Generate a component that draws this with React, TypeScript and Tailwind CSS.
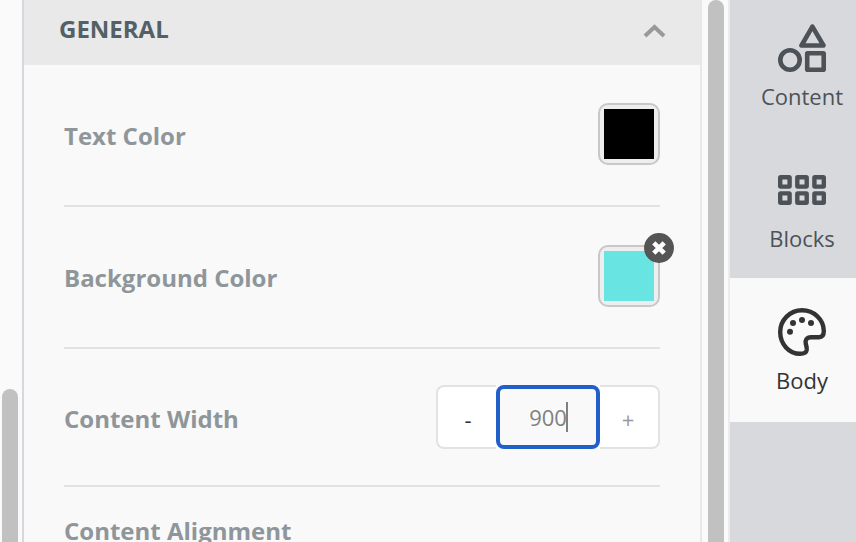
import { useState } from 'react';
import type { ReactNode } from 'react';
import { clsx } from 'clsx';

interface RowProps {
  label: string;
  htmlFor: string;
  className?: string;
  children?: ReactNode;
}

function Row({ label, htmlFor, className, children }: RowProps) {
  return (
    <div className={clsx('flex items-center justify-between border-b-2 border-[#e1e1e6]', className)}>
      <label htmlFor={htmlFor} className="pt-[3px] text-2xl font-bold text-[#8f9699]">
        {label}
      </label>
      {children}
    </div>
  );
}

interface SwatchProps {
  id: string;
  color: string;
  onClear?: () => void;
}

function Swatch({ id, color, onClear }: SwatchProps) {
  return (
    <div className="relative">
      <button
        id={id}
        type="button"
        className="block size-[62px] rounded-[10px] border-2 border-[#c8c8c8] bg-[#eeeeee] p-1"
      >
        <span className="block size-full" style={{ backgroundColor: color }} />
      </button>
      {onClear && (
        <button
          type="button"
          aria-label="Clear color"
          onClick={onClear}
          className="absolute -top-3 -right-3.5 flex size-[30px] items-center justify-center rounded-full bg-[#555555]"
        >
          <svg viewBox="0 0 16 16" className="size-4" stroke="#fff" strokeWidth="4.6">
            <path d="M2.8 2.8L13.2 13.2M13.2 2.8L2.8 13.2" />
          </svg>
        </button>
      )}
    </div>
  );
}

function ContentIcon() {
  return (
    <svg viewBox="0 0 48 48" className="size-12" fill="none" stroke="currentColor" strokeWidth="4.6" strokeLinejoin="round">
      <path d="M34.4 2.6L23.5 21.5H45.5Z" />
      <circle cx="12" cy="36" r="9.7" />
      <rect x="29.2" y="29.2" width="16.5" height="16.5" rx="0.5" />
    </svg>
  );
}

function BlocksIcon() {
  return (
    <svg viewBox="0 0 48 48" className="size-12" fill="none" stroke="currentColor" strokeWidth="4.4" strokeLinejoin="round">
      {[2.2, 19.3, 36.4].map((x) => (
        <g key={x}>
          <rect x={x} y="11.2" width="9.4" height="9.4" rx="0.5" />
          <rect x={x} y="27.4" width="9.4" height="9.4" rx="0.5" />
        </g>
      ))}
    </svg>
  );
}

function BodyIcon() {
  return (
    <svg viewBox="0 0 48 48" className="size-12" fill="none" stroke="currentColor" strokeWidth="4.4">
      <path d="M22 45.8C11 45.8 2.2 36 2.2 24C2.2 12 12 2.2 24 2.2C36 2.2 45.8 11.5 45.8 23C45.8 27 44.5 29.2 41 29.2H33C28.6 29.2 26.8 32.4 27.8 36C28.6 38.5 29 39.5 28.7 42C28.3 44.8 26 45.8 22 45.8Z" />
      <g fill="currentColor" stroke="none">
        <circle cx="12" cy="23.8" r="3" />
        <circle cx="15" cy="15" r="3" />
        <circle cx="24" cy="12" r="3" />
        <circle cx="33" cy="15" r="3" />
      </g>
    </svg>
  );
}

const tabs = [
  { name: 'Content', icon: <ContentIcon /> },
  { name: 'Blocks', icon: <BlocksIcon /> },
  { name: 'Body', icon: <BodyIcon /> },
];

export default function App() {
  const [width, setWidth] = useState(900);
  const [background, setBackground] = useState('#68e5e3');
  const [active, setActive] = useState('Body');

  return (
    <div className="flex h-screen overflow-hidden bg-[#f9f9f9] font-['Open_Sans',sans-serif]">
      {/* Canvas scrollbar */}
      <div className="flex w-6 shrink-0 border-r-2 border-[#d7d7dd] bg-[#fafafa] pt-[389px] pl-0.5">
        <div className="w-4 rounded-t-full bg-[#c1c1c1]" />
      </div>

      {/* Settings panel */}
      <main className="min-w-0 flex-1 border-r-2 border-[#e8e8e8]">
        <button
          type="button"
          className="flex w-full items-center justify-between bg-[#e9e9e9] pt-[11px] pr-[34px] pb-[18px] pl-[35px] text-2xl leading-9 font-bold text-[#536166]"
        >
          <span className="uppercase">General</span>
          <svg viewBox="0 0 24 20" className="h-5 w-6" fill="none" stroke="#999999" strokeWidth="4">
            <path d="M3 17L12.5 8L22 17" />
          </svg>
        </button>
        <div className="px-10">
          <Row label="Text Color" htmlFor="text-color" className="pt-[38px] pb-10">
            <Swatch id="text-color" color="#000000" />
          </Row>
          <Row label="Background Color" htmlFor="background-color" className="pt-[38px] pb-10">
            <Swatch id="background-color" color={background} onClear={() => setBackground('transparent')} />
          </Row>
          <Row label="Content Width" htmlFor="content-width" className="py-9">
            <div className="flex h-16 rounded-lg bg-white text-[22px]">
              <button
                type="button"
                aria-label="Decrease"
                onClick={() => setWidth(width - 1)}
                className="w-[60px] rounded-l-lg border-2 border-r-0 border-[#e1e3e3] pt-1 pl-0.5 text-[#333333]"
              >
                -
              </button>
              <div className="relative">
                <input
                  id="content-width"
                  type="text"
                  value={width}
                  onChange={(e) => setWidth(Number(e.target.value) || 0)}
                  className="h-16 w-[104px] rounded-lg border-4 border-[#2060c8] bg-[#f9f9f9] text-center text-[#808080] caret-transparent outline-none"
                />
                <span className="pointer-events-none absolute top-[17px] left-[70px] h-[30px] w-0.5 bg-[#808080]" />
              </div>
              <button
                type="button"
                aria-label="Increase"
                onClick={() => setWidth(width + 1)}
                className="w-[60px] rounded-r-lg border-2 border-l-0 border-[#e1e3e3] pt-1 pr-0.5 text-[#999999]"
              >
                +
              </button>
            </div>
          </Row>
          <p className="pt-7 text-2xl font-bold text-[#8f9699]">Content Alignment</p>
        </div>
      </main>

      {/* Panel scrollbar */}
      <div className="flex w-7 shrink-0 border-r-2 border-[#ececec] bg-[#fafafa] pl-1.5">
        <div className="w-4 rounded-t-full bg-[#c1c1c1]" />
      </div>

      {/* Editor tabs */}
      <nav className="w-[126px] shrink-0 bg-[#d8d9dd]">
        <div className="-mt-1.5 flex flex-col">
          {tabs.map((tab) => (
            <button
              key={tab.name}
              type="button"
              onClick={() => setActive(tab.name)}
              className={clsx(
                'flex flex-col items-center gap-2 pt-[30px] pl-[18px] text-[22px] leading-8',
                tab.name === active ? 'bg-[#f9f9f9] pb-[26px] text-[#333333]' : 'pb-6 text-[#4c5257]'
              )}
            >
              {tab.icon}
              {tab.name}
            </button>
          ))}
        </div>
      </nav>
    </div>
  );
}
